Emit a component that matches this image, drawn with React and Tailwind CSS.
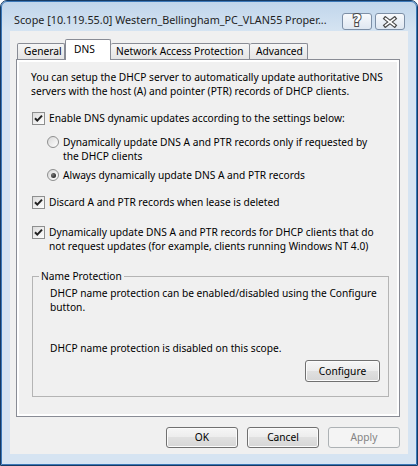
import React from "react";

const F = "font-['Noto_Sans','Open_Sans',sans-serif]";

function CheckBox() {
  return (
    <span className="mt-[1px] flex h-[13px] w-[13px] shrink-0 items-center justify-center border border-[#8e8f8f] bg-[linear-gradient(135deg,#dcdcdc,#ffffff)]">
      <svg width="11" height="11" viewBox="0 0 11 11">
        <path d="M2 5.2 L4.3 7.6 L9 2.6" fill="none" stroke="#222" strokeWidth="2" />
      </svg>
    </span>
  );
}

function Radio({ checked }) {
  return (
    <span className="mt-[1px] flex h-[12px] w-[12px] shrink-0 items-center justify-center rounded-full border border-[#8e8f8f] bg-[linear-gradient(135deg,#d8d8d8,#ffffff)]">
      {checked && <span className="h-[5px] w-[5px] rounded-full bg-[radial-gradient(circle_at_35%_35%,#777,#111)]" />}
    </span>
  );
}

function Btn({ children, disabled, className = "" }) {
  return (
    <div
      className={
        "flex h-[21px] w-[72px] items-center justify-center rounded-[3px] border " +
        (disabled
          ? "border-[#adb2b5] bg-[#f4f4f4] text-[#838383]"
          : "border-[#707070] bg-[linear-gradient(#f6f6f6_0%,#ececec_50%,#e0e0e0_50%,#d6d6d6_100%)] text-black shadow-[inset_0_0_0_1px_#fbfbfb]") +
        " " +
        className
      }
    >
      {children}
    </div>
  );
}

export default function App() {
  return (
    <div className={"h-[466px] w-[418px] " + F}>
      <div className="flex h-full w-full flex-col rounded-t-[7px] border border-[#163a63] bg-[#d6e4f2]">
        <div className="flex h-full w-full flex-col rounded-t-[6px] border border-[#3b78b8] bg-[linear-gradient(#c0d5eb_0px,#d6e4f2_30px,#d6e4f2_100%)]">
          {/* title bar */}
          <div className="flex h-[29px] shrink-0 items-center pl-[12px]">
            <div className="mt-[8px] min-w-0 flex-1 overflow-hidden whitespace-nowrap text-[10.8px] text-[#1e1e1e]">
              Scope [10.119.55.0] Western_Bellingham_PC_VLAN55 Proper...
            </div>
            <div className="mr-[11px] mt-[10px] flex shrink-0 gap-[3px]">
              <div className="flex h-[17px] w-[30px] items-center justify-center rounded-[3px] border border-[#7d8fa6] bg-[linear-gradient(#f7f9fc,#dfe7f1)]">
                <span className="text-[15px] font-bold leading-none text-white [-webkit-text-stroke:2px_#4a4a4a] [paint-order:stroke_fill] font-['DejaVu_Sans',sans-serif]">
                  ?
                </span>
              </div>
              <div className="flex h-[17px] w-[30px] items-center justify-center rounded-[3px] border border-[#7d8fa6] bg-[linear-gradient(#f7f9fc,#dfe7f1)]">
                <svg width="16" height="12" viewBox="0 0 16 12">
                  <path d="M3.5 2.5 L12.5 9.5 M12.5 2.5 L3.5 9.5" stroke="#4a4a4a" strokeWidth="4" strokeLinecap="square" />
                  <path d="M3.5 2.5 L12.5 9.5 M12.5 2.5 L3.5 9.5" stroke="#fff" strokeWidth="1.6" strokeLinecap="square" />
                </svg>
              </div>
            </div>
          </div>

          {/* content */}
          <div className="mb-[10px] ml-[8px] mr-[8px] flex flex-1 flex-col bg-[#f0f0f0] text-[10.2px] text-black">
            {/* tabs */}
            <div className="ml-[7px] mt-[8px] flex h-[20px] items-end">
              <div className="flex h-[16px] w-[48px] items-center rounded-t-[2px] border border-b-0 border-[#898c95] bg-[linear-gradient(#f6f6f6,#e4e4e4)] pl-[6px]">
                General
              </div>
              <div className="relative z-10 -mb-px flex h-[21px] w-[46px] items-start rounded-t-[2px] border border-b-0 border-[#898c95] bg-white pl-[8px] pt-[2px]">
                DNS
              </div>
              <div className="flex h-[16px] w-[139px] items-center rounded-t-[2px] border border-b-0 border-l-0 border-[#898c95] bg-[linear-gradient(#f6f6f6,#e4e4e4)] pl-[5px]">
                Network Access Protection
              </div>
              <div className="flex h-[16px] w-[58px] items-center rounded-t-[2px] border border-b-0 border-l-0 border-[#898c95] bg-[linear-gradient(#f6f6f6,#e4e4e4)] pl-[6px]">
                Advanced
              </div>
            </div>

            {/* panel */}
            <div className="ml-[6px] h-[358px] w-[384px] border border-[#898c95] bg-white p-[2px]">
              <div className="flex h-full flex-col bg-[#f0f0f0] pl-[12px] pt-[8px] leading-[14px]">
                <div className="whitespace-nowrap">
                  You can setup the DHCP server to automatically update authoritative DNS
                  <br />
                  servers with the host (A) and pointer (PTR) records of DHCP clients.
                </div>

                <div className="ml-[1px] mt-[13px] flex gap-[4px]">
                  <CheckBox />
                  <span className="whitespace-nowrap">Enable DNS dynamic updates according to the settings below:</span>
                </div>

                <div className="ml-[16px] mt-[10px] flex gap-[4px]">
                  <Radio />
                  <span className="whitespace-nowrap">
                    Dynamically update DNS A and PTR records only if requested by
                    <br />
                    the DHCP clients
                  </span>
                </div>

                <div className="ml-[16px] mt-[5px] flex gap-[4px]">
                  <Radio checked />
                  <span className="whitespace-nowrap">Always dynamically update DNS A and PTR records</span>
                </div>

                <div className="ml-[1px] mt-[13px] flex gap-[4px]">
                  <CheckBox />
                  <span className="whitespace-nowrap">Discard A and PTR records when lease is deleted</span>
                </div>

                <div className="ml-[1px] mt-[16px] flex gap-[4px]">
                  <CheckBox />
                  <span className="whitespace-nowrap">
                    Dynamically update DNS A and PTR records for DHCP clients that do
                    <br />
                    not request updates (for example, clients running Windows NT 4.0)
                  </span>
                </div>

                <fieldset className="ml-[1px] mt-[16px] w-[357px] border border-[#b4b4b4] pb-[14px] pl-[17px] pr-[8px]">
                  <legend className="-ml-[11px] px-[2px] leading-[14px]">Name Protection</legend>
                  <div className="mt-[3px] whitespace-nowrap">
                    DHCP name protection can be enabled/disabled using the Configure
                    <br />
                    button.
                  </div>
                  <div className="mt-[27px] whitespace-nowrap">DHCP name protection is disabled on this scope.</div>
                  <div className="mt-[5px] flex justify-end">
                    <Btn className="h-[22px] w-[75px]">Configure</Btn>
                  </div>
                </fieldset>
              </div>
            </div>

            {/* bottom buttons */}
            <div className="mr-[8px] mt-[10px] flex justify-end gap-[9px]">
              <Btn>OK</Btn>
              <Btn>Cancel</Btn>
              <Btn disabled>Apply</Btn>
            </div>
          </div>
        </div>
      </div>
    </div>
  );
}
